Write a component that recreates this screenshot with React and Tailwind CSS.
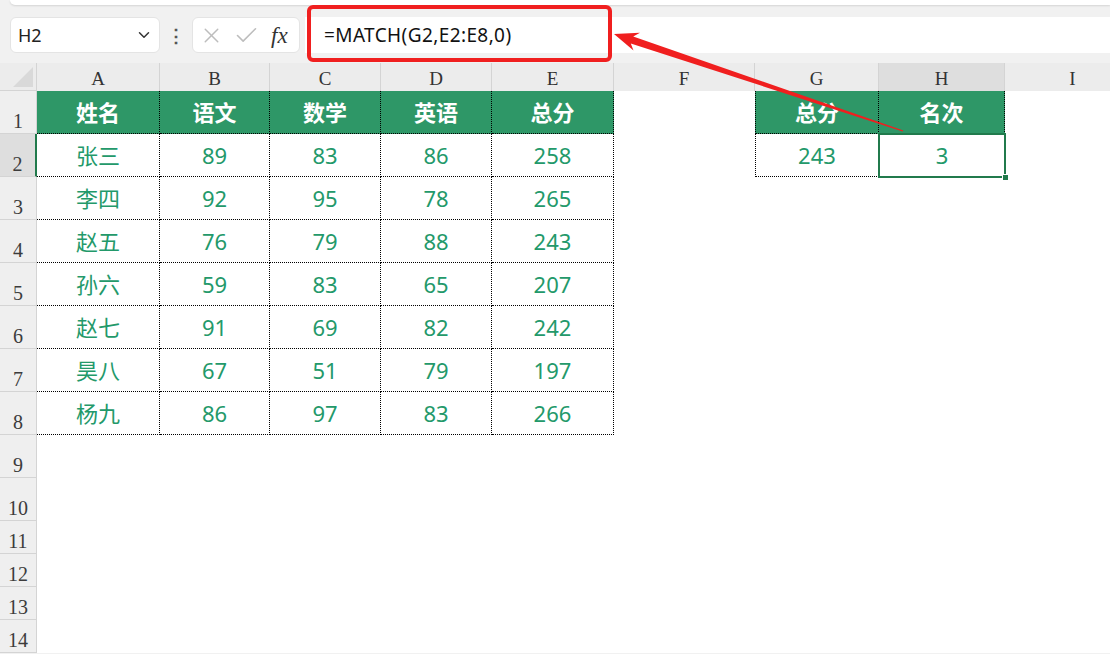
import { ChevronDown, X, Check } from "lucide-react";

const COLS = ["A", "B", "C", "D", "E", "F", "G", "H", "I"];

const HEAD = ["姓名", "语文", "数学", "英语", "总分"];
const ROWS = [
  ["张三", "89", "83", "86", "258"],
  ["李四", "92", "95", "78", "265"],
  ["赵五", "76", "79", "88", "243"],
  ["孙六", "59", "83", "65", "207"],
  ["赵七", "91", "69", "82", "242"],
  ["昊八", "67", "51", "79", "197"],
  ["杨九", "86", "97", "83", "266"],
];

const cellFont = { fontFamily: "'Noto Sans', 'Noto Sans CJK SC', sans-serif" };
const serif = { fontFamily: "'Liberation Serif', 'DejaVu Serif', serif" };

function Cell({ r, c }) {
  const dotted = "border-dotted border-black border-r border-b";
  // main table A..E, rows 1..8
  if (r <= 8 && c <= 4) {
    if (r === 1) {
      return (
        <div className={`flex items-center justify-center bg-[#2e9767] text-white font-bold text-[22px] ${dotted}`} style={cellFont}>
          {HEAD[c]}
        </div>
      );
    }
    return (
      <div className={`flex items-center justify-center bg-white text-[#23996a] text-[22px] ${dotted}`} style={cellFont}>
        {ROWS[r - 2][c]}
      </div>
    );
  }
  // G..H lookup table
  if (r <= 2 && (c === 6 || c === 7)) {
    const extra = c === 6 ? "border-l" : "";
    if (r === 1) {
      return (
        <div className={`flex items-center justify-center bg-[#2e9767] text-white font-bold text-[22px] ${dotted} ${extra}`} style={cellFont}>
          {c === 6 ? "总分" : "名次"}
        </div>
      );
    }
    if (c === 6) {
      return (
        <div className={`flex items-center justify-center bg-white text-[#23996a] text-[22px] ${dotted} ${extra}`} style={cellFont}>
          243
        </div>
      );
    }
    return (
      <div className="relative flex items-center justify-center bg-white text-[#23996a] text-[22px]" style={cellFont}>
        3
        <div className="absolute -left-[1px] -top-[1px] -right-[1px] -bottom-[1px] border-2 border-[#217a4c]" />
        <div className="absolute -right-[4px] -bottom-[4px] w-[7px] h-[7px] bg-[#217a4c] border border-white" />
      </div>
    );
  }
  return <div className="bg-white" />;
}

export default function App() {
  const rowNums = Array.from({ length: 14 }, (_, i) => i + 1);

  return (
    <div className="relative w-[1110px] h-[654px] overflow-hidden bg-[#f1f1f1]">
      {/* formula bar */}
      <div className="h-[63px] flex flex-col">
        <div className="pl-[10px] h-[5px]">
          <div className="h-full bg-white rounded-bl-md shadow-[0_1px_2px_rgba(0,0,0,0.12)]" />
        </div>
        <div className="flex items-center mt-[12px] h-[36px]">
          <div className="ml-[10px] w-[150px] h-full bg-white rounded-md border border-[#e4e4e4] flex items-center justify-between pl-[7px] pr-[6px]">
            <span className="text-[18px] text-[#222]" style={cellFont}>H2</span>
            <ChevronDown size={18} strokeWidth={2} className="text-[#333]" />
          </div>
          <div className="w-[32px] flex justify-center text-[#555] text-[18px] font-bold leading-none" style={cellFont}>⋮</div>
          <div className="w-[108px] h-full bg-white rounded-md border border-[#e4e4e4] flex items-center pl-[6px]">
            <X size={25} strokeWidth={1.4} className="text-[#bdbdbd]" />
            <Check size={27} strokeWidth={1.4} className="text-[#bdbdbd] ml-[9px]" />
            <span className="ml-[11px] text-[23px] italic text-[#333] leading-none" style={serif}>fx</span>
          </div>
          <div className="ml-[5px] flex-1 h-full bg-white flex items-center pl-[19px]">
            <span className="text-[19px] tracking-[0.4px] text-[#111]" style={cellFont}>=MATCH(G2,E2:E8,0)</span>
          </div>
        </div>
      </div>

      {/* sheet */}
      <div className="grid grid-cols-[37px_123px_110px_111px_111px_122px_141px_124px_126px_136px] grid-rows-[28px_repeat(10,43px)_repeat(4,33px)] bg-white">
        <div className="relative bg-[#ececec] border-r border-b border-[#d4d4d4]">
          <div className="absolute right-[3px] bottom-[3px] w-0 h-0 border-l-[20px] border-l-transparent border-b-[20px] border-b-[#d9d9d9]" />
        </div>
        {COLS.map((l) => (
          <div
            key={l}
            className={`flex items-center justify-center pt-[4px] text-[19px] text-[#333] border-r border-[#d4d4d4] ${l === "H" ? "bg-[#dedede]" : "bg-[#ececec]"}`}
            style={serif}
          >
            {l}
          </div>
        ))}
        {rowNums.map((r) => (
          <RowCells key={r} r={r} />
        ))}
      </div>

      {/* red highlight on the formula */}
      <div className="absolute left-[307px] top-[5px] w-[305px] h-[57px] border-4 border-[#f01f1f] rounded-md" />

      {/* arrow */}
      <svg className="absolute inset-0 pointer-events-none" width="1110" height="654" viewBox="0 0 1110 654">
        <polygon
          fill="#f01f1f"
          points="614,34 640,32.8 633.2,36.6 903.3,130.4 902.7,131.6 630.8,43.4 633.5,50.5"
        />
      </svg>
    </div>
  );
}

function RowCells({ r }) {
  const sel = r === 2;
  return (
    <>
      <div
        className={`flex items-end justify-center text-[20px] leading-[24px] text-[#3c3c3c] border-b border-[#d4d4d4] ${sel ? "bg-[#dedede] border-r-2 border-r-[#217a4c]" : "bg-[#efefef] border-r border-r-[#d4d4d4]"}`}
        style={serif}
      >
        {r}
      </div>
      {COLS.map((_, c) => (
        <Cell key={c} r={r} c={c} />
      ))}
    </>
  );
}
